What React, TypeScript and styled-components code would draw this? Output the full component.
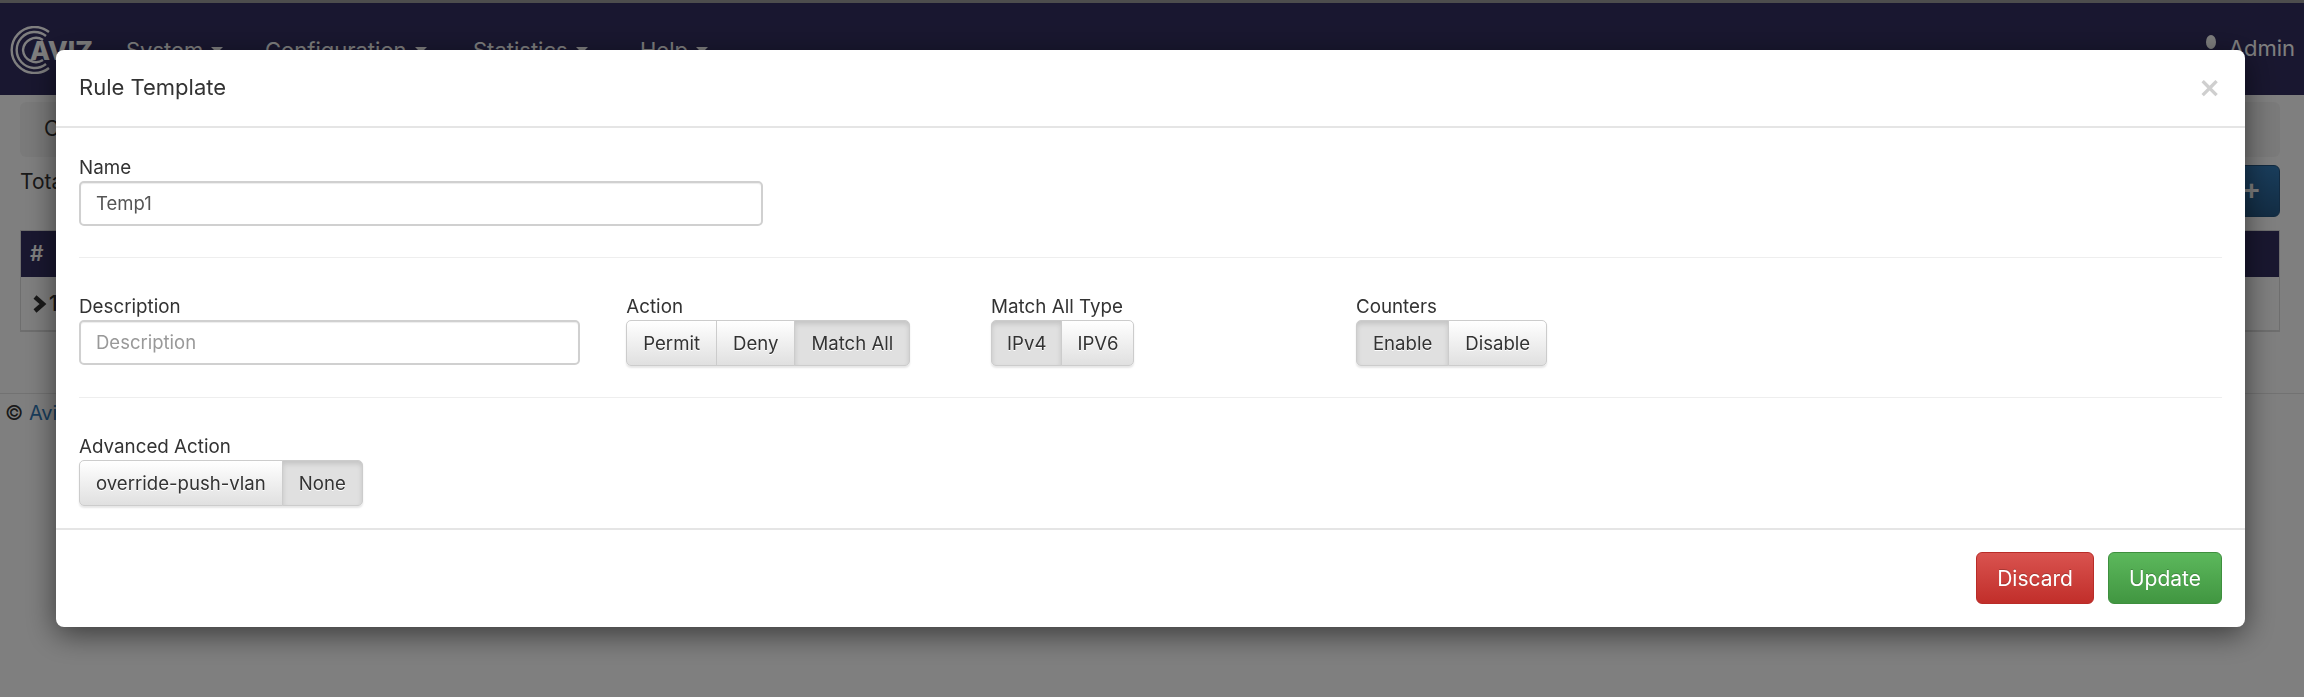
import styled, { createGlobalStyle } from "styled-components";

const GlobalStyle = createGlobalStyle`
  html, body {
    margin: 0;
    height: 697px;
    overflow: hidden;
    background: #fff;
    font-family: Inter, "Liberation Sans", sans-serif;
    color: #333;
  }
  * { box-sizing: border-box; }
`;

const Page = styled.div`
  height: 697px;
  border-top: 3px solid #9a9a9a;
`;

const Nav = styled.nav`
  height: 92px;
  background: #332f60;
  display: flex;
  align-items: flex-start;
  padding: 23px 9px 0 7px;
  color: #fff;
`;

const Brand = styled.div`
  display: flex;
  align-items: center;
  width: 119px;
  height: 48px;
`;

const BrandName = styled.span`
  font-size: 26px;
  font-weight: 800;
  margin-left: -27px;
`;

const NavItems = styled.div`
  display: flex;
  flex: 1;
  font-size: 22px;
  padding-top: 11px;
`;

const NavItem = styled.div<{ width: number }>`
  width: ${({ width }) => width}px;
  display: flex;
  align-items: center;
  gap: 8px;
`;

const Caret = styled.span`
  border-top: 6px solid #fff;
  border-left: 6px solid transparent;
  border-right: 6px solid transparent;
`;

const UserMenu = styled.div`
  display: flex;
  align-items: center;
  gap: 12px;
  font-size: 22px;
  padding-top: 9px;
`;

const Content = styled.div`
  padding: 7px 24px 0 20px;
`;

const Panel = styled.div`
  height: 55px;
  background: #f5f5f5;
  border-radius: 6px;
  padding: 14px 24px;
  font-size: 21px;
`;

const Toolbar = styled.div`
  display: flex;
  justify-content: space-between;
  margin-top: 8px;
  font-size: 21px;
`;

const TotalText = styled.div`
  padding-top: 4px;
`;

const AddButton = styled.button`
  width: 57px;
  height: 52px;
  border: 1px solid #245580;
  border-radius: 6px;
  background: linear-gradient(#337ab7, #265a88);
  color: #fff;
  font-size: 28px;
  font-weight: 700;
`;

const Table = styled.div`
  margin-top: 13px;
  border: 1px solid #ddd;
  border-bottom-width: 2px;
`;

const TableHead = styled.div`
  height: 46px;
  background: #332f60;
  color: #fff;
  font-size: 21px;
  font-weight: 600;
  padding: 10px 9px;
`;

const TableRow = styled.div`
  height: 53px;
  display: flex;
  align-items: center;
  gap: 2px;
  font-size: 21px;
  padding: 0 12px;
  font-weight: 500;
`;

const Footer = styled.footer`
  margin: 61px -24px 0 -20px;
  border-top: 1px solid #e5e5e5;
  padding: 7px 5px;
  font-size: 20px;
`;

const FooterLink = styled.a`
  color: #337ab7;
`;

const Backdrop = styled.div`
  position: fixed;
  inset: 0;
  background: rgba(0, 0, 0, 0.5);
`;

const Overlay = styled.div`
  position: fixed;
  inset: 0;
  padding: 50px 0 0 56px;
`;

const Modal = styled.div`
  width: 2189px;
  height: 577px;
  background: #fff;
  border-radius: 8px;
  box-shadow: 0 7px 30px rgba(0, 0, 0, 0.55);
  display: flex;
  flex-direction: column;
`;

const ModalHeader = styled.header`
  height: 78px;
  flex: none;
  border-bottom: 2px solid #e5e5e5;
  display: flex;
  justify-content: space-between;
  padding: 23px 24px 0 23px;
`;

const ModalTitle = styled.h4`
  margin: 0;
  font-size: 22px;
  font-weight: 400;
  line-height: 28px;
  color: #333;
`;

const Close = styled.span`
  font-size: 34px;
  line-height: 26px;
  font-weight: 500;
  color: #cfcfcf;
`;

const ModalBody = styled.div`
  flex: 1;
  padding: 25px 23px 0;
`;

const FormRow = styled.div`
  display: grid;
  grid-template-columns: repeat(12, 1fr);
  margin: 0 -23px;
`;

const Field = styled.div<{ span: number }>`
  grid-column: span ${({ span }) => span};
  padding: 0 23px;
`;

const Label = styled.label`
  display: block;
  font-size: 18.8px;
  line-height: 26px;
  padding-top: 2px;
  color: #333;
`;

const Input = styled.input`
  display: block;
  width: 100%;
  height: 45px;
  padding: 0 15px 2px;
  border: 2px solid #d0d0d0;
  border-radius: 5px;
  box-shadow: inset 0 1px 1px rgba(0, 0, 0, 0.075);
  font: inherit;
  font-size: 18.5px;
  color: #555;
  &::placeholder {
    color: #999;
    opacity: 1;
  }
`;

const Divider = styled.hr`
  border: 0;
  border-top: 1px solid #eee;
  margin: 31px 0 34px;
`;

const ButtonGroup = styled.div`
  display: inline-flex;
  height: 46px;
  border-radius: 5px;
  box-shadow: 0 2px 2px rgba(0, 0, 0, 0.1);
`;

const GroupButton = styled.button<{ active?: boolean; tight?: boolean }>`
  height: 100%;
  padding: 0 ${({ tight }) => (tight ? "15px" : "16px")};
  font: inherit;
  font-size: 18.6px;
  color: #333;
  text-shadow: 0 1px 0 #fff;
  border: 1px solid #ccc;
  margin-left: -1px;
  background: ${({ active }) =>
    active ? "#e0e0e0" : "linear-gradient(#fff, #e0e0e0)"};
  box-shadow: ${({ active }) =>
    active ? "inset 0 3px 5px rgba(0, 0, 0, 0.125)" : "none"};
  &:first-child {
    margin-left: 0;
    border-radius: 5px 0 0 5px;
  }
  &:last-child {
    border-radius: 0 5px 5px 0;
  }
`;

const ModalFooter = styled.footer`
  height: 99px;
  flex: none;
  border-top: 2px solid #e5e5e5;
  display: flex;
  justify-content: flex-end;
  gap: 14px;
  padding: 22px 23px 0 0;
`;

const FooterButton = styled.button<{ tone: "danger" | "success" }>`
  height: 52px;
  padding: 0 20px;
  border-radius: 6px;
  font: inherit;
  font-size: 21px;
  color: #fff;
  text-shadow: 0 -1px 0 rgba(0, 0, 0, 0.2);
  border: 1px solid ${({ tone }) => (tone === "danger" ? "#b92c28" : "#3e8f3e")};
  background: ${({ tone }) =>
    tone === "danger"
      ? "linear-gradient(#d9534f, #c12e2a)"
      : "linear-gradient(#5cb85c, #419641)"};
`;

const AvizRings = () => (
  <svg width="50" height="48" viewBox="0 0 50 48" fill="none" stroke="#fff" strokeWidth="2.4">
    <path d="M42 6A23 23 0 1 0 42 42" />
    <path d="M39 10A18 18 0 1 0 39 38" />
    <path d="M36 14A13 13 0 0 0 16 24A13 13 0 0 0 36 34" />
  </svg>
);

const UserIcon = () => (
  <svg width="12" height="26" viewBox="0 0 12 26" fill="#fff">
    <ellipse cx="6" cy="7" rx="5" ry="7" />
    <path d="M0 26V19C0 16 3 15 6 15S12 16 12 19V26Z" />
  </svg>
);

const RowChevron = () => (
  <svg width="14" height="18" viewBox="0 0 14 18" fill="none" stroke="#333" strokeWidth="4.5">
    <path d="M2 2L10 9L2 16" />
  </svg>
);

const navItems = [
  { label: "System", width: 139 },
  { label: "Configuration", width: 208 },
  { label: "Statistics", width: 167 },
  { label: "Help", width: 100 },
];

const App = () => {
  return (
    <>
      <GlobalStyle />
      <Page>
        <Nav>
          <Brand>
            <AvizRings />
            <BrandName>AVIZ</BrandName>
          </Brand>
          <NavItems>
            {navItems.map((item) => (
              <NavItem key={item.label} width={item.width}>
                {item.label}
                <Caret />
              </NavItem>
            ))}
          </NavItems>
          <UserMenu>
            <UserIcon />
            Admin
          </UserMenu>
        </Nav>
        <Content>
          <Panel>Configuration</Panel>
          <Toolbar>
            <TotalText>Total</TotalText>
            <AddButton>+</AddButton>
          </Toolbar>
          <Table>
            <TableHead>#</TableHead>
            <TableRow>
              <RowChevron />1
            </TableRow>
          </Table>
          <Footer>
            © <FooterLink>Aviz</FooterLink>
          </Footer>
        </Content>
      </Page>
      <Backdrop />
      <Overlay>
        <Modal>
          <ModalHeader>
            <ModalTitle>Rule Template</ModalTitle>
            <Close>×</Close>
          </ModalHeader>
          <ModalBody>
            <FormRow>
              <Field span={4}>
                <Label>Name</Label>
                <Input defaultValue="Temp1" />
              </Field>
            </FormRow>
            <Divider />
            <FormRow>
              <Field span={3}>
                <Label>Description</Label>
                <Input placeholder="Description" />
              </Field>
              <Field span={2}>
                <Label>Action</Label>
                <ButtonGroup>
                  <GroupButton>Permit</GroupButton>
                  <GroupButton>Deny</GroupButton>
                  <GroupButton active>Match All</GroupButton>
                </ButtonGroup>
              </Field>
              <Field span={2}>
                <Label>Match All Type</Label>
                <ButtonGroup>
                  <GroupButton active tight>IPv4</GroupButton>
                  <GroupButton tight>IPV6</GroupButton>
                </ButtonGroup>
              </Field>
              <Field span={2}>
                <Label>Counters</Label>
                <ButtonGroup>
                  <GroupButton active>Enable</GroupButton>
                  <GroupButton>Disable</GroupButton>
                </ButtonGroup>
              </Field>
            </FormRow>
            <Divider />
            <FormRow>
              <Field span={3}>
                <Label>Advanced Action</Label>
                <ButtonGroup>
                  <GroupButton>override-push-vlan</GroupButton>
                  <GroupButton active>None</GroupButton>
                </ButtonGroup>
              </Field>
            </FormRow>
          </ModalBody>
          <ModalFooter>
            <FooterButton tone="danger">Discard</FooterButton>
            <FooterButton tone="success">Update</FooterButton>
          </ModalFooter>
        </Modal>
      </Overlay>
    </>
  );
};

export default App;
